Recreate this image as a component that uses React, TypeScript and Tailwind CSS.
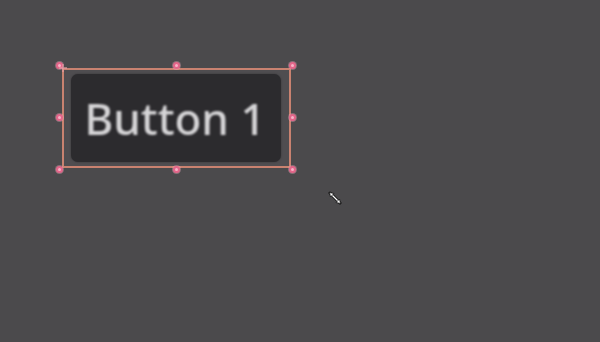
import React from 'react'

// Handle dots around the selected control, positions relative to the frame box
const handles = [
  { x: 59, y: 65 },
  { x: 176, y: 65 },
  { x: 292, y: 65 },
  { x: 59, y: 117 },
  { x: 292, y: 117 },
  { x: 59, y: 169 },
  { x: 176, y: 169 },
  { x: 292, y: 169 },
]

function Handle({ x, y }: { x: number; y: number }) {
  return (
    <div
      className="absolute h-[7px] w-[7px] rounded-full bg-[#e3668a] shadow-[0_0_0_1px_rgba(255,180,200,0.35)]"
      style={{ left: x - 3.5, top: y - 3.5 }}
    >
      <div className="m-[2px] h-[3px] w-[3px] rounded-full bg-[#f7b3c6]" />
    </div>
  )
}

function ResizeCursor() {
  return (
    <svg width="14" height="14" viewBox="0 0 14 14" className="absolute left-[328px] top-[191px]">
      <path d="M2 2 L12 12" stroke="#111" strokeWidth="3" strokeLinecap="round" />
      <path d="M2 2 L12 12" stroke="#fff" strokeWidth="1.2" />
      <path d="M1.5 1.5 L6 2.5 L2.5 6 Z" fill="#fff" stroke="#111" strokeWidth="0.8" />
      <path d="M12.5 12.5 L8 11.5 L11.5 8 Z" fill="#fff" stroke="#111" strokeWidth="0.8" />
    </svg>
  )
}

function MoveCursor() {
  return (
    <svg width="10" height="10" viewBox="0 0 10 10" className="absolute left-[58px] top-[63px] opacity-80">
      <path d="M5 1 V9 M1 5 H9" stroke="#e8a0a8" strokeWidth="1.4" />
    </svg>
  )
}

export default function App() {
  return (
    <div className="relative h-[342px] w-[600px] overflow-hidden bg-[#4b4a4c] font-['Noto_Sans',sans-serif]">
      <div className="pl-[62px] pt-[68px]">
        <div className="h-[100px] w-[229px] border-2 border-solid border-[#c98270] bg-[#4f4d50] pl-[7px] pt-[4px]">
          <div className="flex h-[88px] w-[210px] items-center justify-center rounded-[7px] bg-[#2c2b2e] pr-[2px] shadow-[0_0_2px_rgba(0,0,0,0.35)]">
            <span className="inline-block text-[44px] font-medium leading-none text-[#d6d5d7] blur-[0.8px]">Button 1</span>
          </div>
        </div>
      </div>

      {handles.map((h, i) => (
        <Handle key={i} x={h.x} y={h.y} />
      ))}
      <MoveCursor />
      <ResizeCursor />
    </div>
  )
}
